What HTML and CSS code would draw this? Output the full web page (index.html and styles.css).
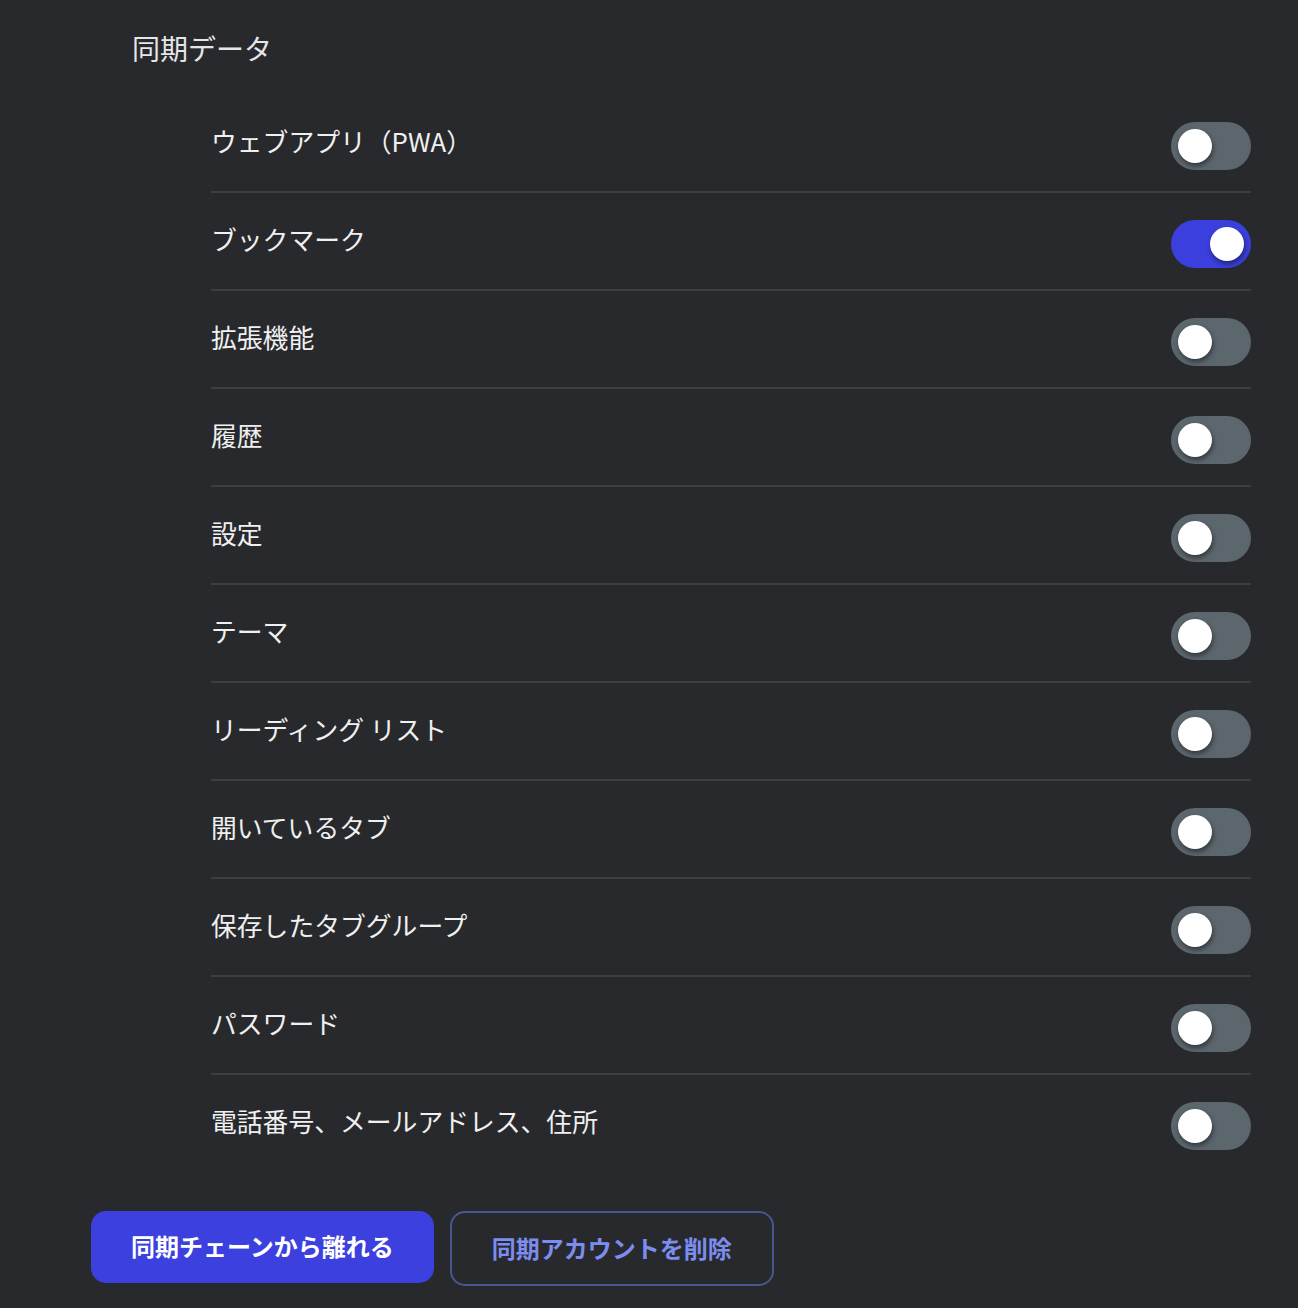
FILE: index.html
```html
<!DOCTYPE html>
<html lang="ja">
<head>
<meta charset="utf-8">
<link rel="stylesheet" href="styles.css">
</head>
<body>
<div class="page">
  <h2 class="title">同期データ</h2>
  <ul class="list">
    <li class="row"><span class="label">ウェブアプリ（PWA）</span><span class="toggle"><span class="knob"></span></span></li>
    <li class="row"><span class="label">ブックマーク</span><span class="toggle on"><span class="knob"></span></span></li>
    <li class="row"><span class="label">拡張機能</span><span class="toggle"><span class="knob"></span></span></li>
    <li class="row"><span class="label">履歴</span><span class="toggle"><span class="knob"></span></span></li>
    <li class="row"><span class="label">設定</span><span class="toggle"><span class="knob"></span></span></li>
    <li class="row"><span class="label">テーマ</span><span class="toggle"><span class="knob"></span></span></li>
    <li class="row"><span class="label">リーディング リスト</span><span class="toggle"><span class="knob"></span></span></li>
    <li class="row"><span class="label">開いているタブ</span><span class="toggle"><span class="knob"></span></span></li>
    <li class="row"><span class="label">保存したタブグループ</span><span class="toggle"><span class="knob"></span></span></li>
    <li class="row"><span class="label">パスワード</span><span class="toggle"><span class="knob"></span></span></li>
    <li class="row"><span class="label">電話番号、メールアドレス、住所</span><span class="toggle"><span class="knob"></span></span></li>
  </ul>
  <div class="actions">
    <button class="btn primary">同期チェーンから離れる</button>
    <button class="btn secondary">同期アカウントを削除</button>
  </div>
</div>
</body>
</html>
```
FILE: styles.css
```css
html, body {
  margin: 0;
  padding: 0;
  background: #28292d;
}
body {
  font-family: "Noto Sans CJK JP", "Noto Sans", sans-serif;
  color: #ececec;
}
.page {
  padding: 28px 47px 0 91px;
}
.title {
  margin: 0 0 0 41px;
  font-size: 28px;
  font-weight: 400;
  line-height: 40px;
  height: 40px;
  color: #e6e6e6;
}
.list {
  list-style: none;
  margin: 27px 0 0 120px;
  padding: 0;
}
.row {
  display: flex;
  align-items: center;
  justify-content: space-between;
  height: 96px;
  border-bottom: 2px solid #3d3e42;
}
.row:last-child {
  border-bottom: none;
}
.label {
  font-size: 25.8px;
  line-height: 36px;
  padding-bottom: 4px;
  color: #f0f0f0;
}
.toggle {
  position: relative;
  width: 80px;
  height: 48px;
  border-radius: 24px;
  background: #5c666d;
  margin-top: 6px;
  flex-shrink: 0;
}
.toggle.on {
  background: #3b3fdd;
}
.knob {
  position: absolute;
  top: 7px;
  left: 7px;
  width: 34px;
  height: 34px;
  border-radius: 50%;
  background: #ffffff;
  box-shadow: 1px 3px 5px rgba(0, 0, 0, 0.45);
}
.toggle.on .knob {
  left: 39px;
}
.actions {
  display: flex;
  align-items: flex-start;
  gap: 16px;
  margin-top: 40px;
}
.btn {
  font-family: "Noto Sans CJK JP", "Noto Sans", sans-serif;
  font-size: 24px;
  font-weight: 700;
  border-radius: 15px;
  padding-bottom: 4px;
  cursor: pointer;
}
.primary {
  height: 72px;
  padding-left: 40px;
  padding-right: 40px;
  background: #3c40df;
  color: #ffffff;
  border: none;
}
.secondary {
  height: 75px;
  padding-left: 40px;
  padding-right: 40px;
  background: transparent;
  color: #7c8df0;
  border: 2px solid #4a5593;
}
```
